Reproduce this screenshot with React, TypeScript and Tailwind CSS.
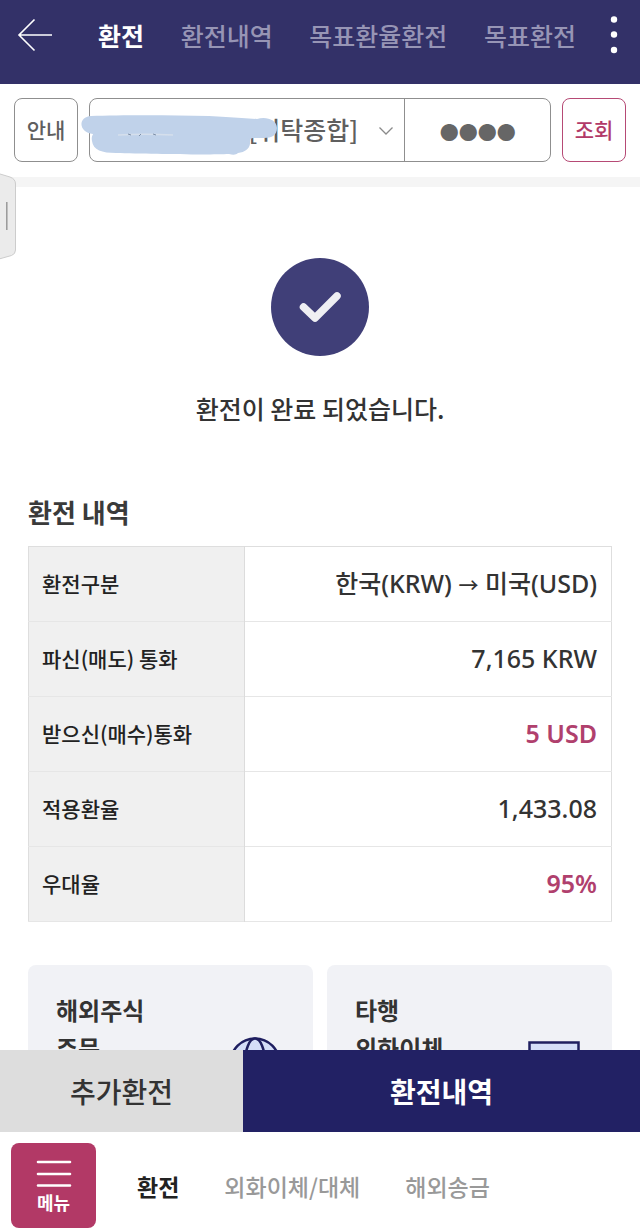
import { useState } from 'react';
import clsx from 'clsx';

const TABS = ['환전', '환전내역', '목표환율환전', '목표환전'];
const BOTTOM_TABS = ['환전', '외화이체/대체', '해외송금'];

const ROWS = [
  {
    label: '환전구분',
    value: (
      <>
        한국(KRW) <span className="text-[20px]">→</span> 미국(USD)
      </>
    ),
  },
  { label: '파신(매도) 통화', value: '7,165 KRW' },
  { label: '받으신(매수)통화', value: '5 USD', accent: true },
  { label: '적용환율', value: '1,433.08' },
  { label: '우대율', value: '95%', accent: true },
];

// ── Top navigation ────────────────────────────────────────────────────────────
function TopNav() {
  const [active, setActive] = useState('환전');

  return (
    <header className="flex h-[84px] shrink-0 items-center bg-[#333168] pr-4 pb-[14px] pl-4 text-white">
      <button aria-label="뒤로" className="w-[82px] shrink-0">
        <svg width="38" height="34" viewBox="0 0 38 34" fill="none" stroke="currentColor" strokeWidth="1.6">
          <path d="M18.5 1.5 3 17l15.500 15.500M3 17h33" />
        </svg>
      </button>
      <nav className="flex flex-1 justify-between">
        {TABS.map((tab) => (
          <button
            key={tab}
            onClick={() => setActive(tab)}
            className={clsx(
              'text-[25px] leading-9 whitespace-nowrap',
              tab === active ? 'font-bold text-white' : 'font-medium text-[#9795b5]'
            )}
          >
            {tab}
          </button>
        ))}
      </nav>
      <button aria-label="더보기" className="ml-7">
        <svg width="20" height="40" viewBox="0 0 20 40" fill="currentColor">
          <circle cx="10" cy="4.500" r="3.200" />
          <circle cx="10" cy="19.500" r="3.200" />
          <circle cx="10" cy="35" r="3.200" />
        </svg>
      </button>
    </header>
  );
}

// ── Account + password row ────────────────────────────────────────────────────
function AccountBar() {
  const [pin, setPin] = useState('●●●●');

  return (
    <div className="flex shrink-0 gap-[11px] border-b-10 border-[#f5f5f5] px-[14px] pt-[14px] pb-[15px] text-[#5f5f5f]">
      <button className="size-16 shrink-0 rounded-lg border border-[#8f8f8f] text-[21px] font-medium">안내</button>

      <div className="relative flex h-16 min-w-0 flex-1 rounded-lg border border-[#8f8f8f]">
        <div className="relative min-w-0 flex-[317]">
          <select
            aria-label="계좌"
            className="h-full w-full appearance-none bg-transparent pr-[46px] text-right text-[25px] font-medium [text-align-last:right]"
          >
            <option>[위탁종합]</option>
          </select>
          <svg
            className="pointer-events-none absolute top-[26px] right-[10px]"
            width="16"
            height="12"
            viewBox="0 0 16 12"
            fill="none"
            stroke="#8a8a8a"
            strokeWidth="1.3"
          >
            <path d="m1.500 2.500 6.500 6.500 6.500-6.500" />
          </svg>
        </div>
        <input
          aria-label="비밀번호"
          value={pin}
          onChange={(e) => setPin(e.target.value)}
          className="min-w-0 flex-[146] border-l border-[#8f8f8f] pt-1 text-center text-[19px] text-[#666666]"
        />
        {/* marker stroke hiding the account number */}
        <svg className="pointer-events-none absolute top-4 -left-[10px]" width="198" height="44" viewBox="0 0 198 44">
          <path
            d="M11 1C40 0 90 0 129 1c18 1 34 2 48 3 8-3 20 0 20 9 0 7-5 10-13 10h-11c-3 0-3 3-3 6-1 5-5 8-12 9-2 2-5 2-9 1-20 1-83 0-113-1-14 0-23-3-24-12-1-5 1-6 1-7C-1 18-3 2 11 1Z"
            fill="#c0d2ea"
          />
          <path d="M38 20c18-1 36-1 55 0" fill="none" stroke="#d5dfec" strokeWidth="1.300" />
          <path d="m48 19 3 1m8 1 2-2m12 0 3 1" fill="none" stroke="#7d8fa8" strokeWidth="1" />
        </svg>
      </div>

      <button className="size-16 shrink-0 rounded-lg border border-[#b64a75] text-[21px] font-medium text-[#b23a68]">
        조회
      </button>
    </div>
  );
}

function SummaryTable() {
  return (
    <table className="mt-4 w-full border-collapse border border-[#dedede]">
      <tbody>
        {ROWS.map(({ label, value, accent }) => (
          <tr key={label} className="h-[75px] border-b border-[#e6e6e6]">
            <th
              scope="row"
              className="w-[37%] border-r border-[#dcdcdc] bg-[#f0f0f0] pl-[13px] text-left text-[21px] font-medium text-[#222222]"
            >
              {label}
            </th>
            <td
              className={clsx(
                "pr-[14px] text-right font-['Noto_Sans','Noto_Sans_CJK_KR',sans-serif] text-[25px]",
                accent ? 'font-semibold text-[#b0406d]' : 'font-medium text-[#333333]'
              )}
            >
              {value}
            </td>
          </tr>
        ))}
      </tbody>
    </table>
  );
}

function GlobeIcon() {
  return (
    <svg width="52" height="52" viewBox="0 0 52 52" fill="#d5def8" stroke="#1f1f60" strokeWidth="2.500">
      <circle cx="26" cy="26" r="24.500" />
      <ellipse cx="26" cy="26" rx="10" ry="24.500" />
      <path d="M2 26h48M5 15h42M5 37h42" fill="none" />
    </svg>
  );
}

function TransferIcon() {
  return (
    <svg width="52" height="52" viewBox="0 0 52 52" fill="#d5def8" stroke="#1f1f60" strokeWidth="2.500">
      <rect x="1.500" y="5.500" width="49" height="40" />
      <path d="M10 36h32" />
    </svg>
  );
}

const SHORTCUTS = [
  { title: ['해외주식', '주문'], Icon: GlobeIcon },
  { title: ['타행', '외화이체'], Icon: TransferIcon },
];

export default function App() {
  const [bottomTab, setBottomTab] = useState('환전');

  return (
    <div className="relative flex h-screen flex-col overflow-hidden bg-white font-['Noto_Sans_CJK_KR','Noto_Sans',sans-serif]">
      <TopNav />
      <AccountBar />

      {/* edge panel handle */}
      <svg className="absolute top-[173px] left-0" width="17" height="87" viewBox="0 0 17 87" aria-hidden="true">
        <path d="M-1 .7 10 4q5.500 2 5.500 7v66q0 4-4 5.500L-1 86Z" fill="#ebebeb" stroke="#cccccc" />
        <path d="M6.800 29v28" stroke="#999999" strokeWidth="1.500" />
      </svg>

      <main className="min-h-0 flex-1 overflow-hidden px-7 pt-[71px]">
        <div className="flex flex-col items-center">
          <svg width="98" height="98" viewBox="0 0 98 98" fill="none">
            <circle cx="49" cy="49" r="49" fill="#403f78" />
            <path
              d="m32.500 49 11.500 11L66 38"
              stroke="#efeff3"
              strokeWidth="7.500"
              strokeLinecap="round"
              strokeLinejoin="round"
            />
          </svg>
          <p className="mt-[34px] text-[25px] leading-9 font-medium text-[#333333]">환전이 완료 되었습니다.</p>
        </div>

        <h2 className="mt-[68px] text-[26px] leading-9 font-bold text-[#3a3a3a]">환전 내역</h2>
        <SummaryTable />

        <div className="mt-[43px] flex gap-[14px]">
          {SHORTCUTS.map(({ title, Icon }) => (
            <a key={title[0]} href="#" className="flex flex-1 justify-between rounded-lg bg-[#f1f2f6] px-7 pt-[26px] pb-7">
              <span className="text-[24px] leading-[38px] font-bold text-[#333333]">
                {title[0]}
                <br />
                {title[1]}
              </span>
              <span className="mt-[46px] mr-1">
                <Icon />
              </span>
            </a>
          ))}
        </div>
      </main>

      <div className="flex h-[82px] shrink-0 text-[28px]">
        <button className="w-[38%] bg-[#dddddd] font-medium text-[#333333]">추가환전</button>
        <button className="flex-1 bg-[#222164] font-bold text-white">환전내역</button>
      </div>

      <nav className="flex shrink-0 items-center bg-white pt-[11px] pr-4 pb-[3px] pl-[11px]">
        <button className="flex size-[85px] flex-col items-center rounded-lg bg-[#b23966] pt-[17px] text-white">
          <svg width="36" height="28" viewBox="0 0 36 28" stroke="currentColor" strokeWidth="2.600" strokeLinecap="round">
            <path d="M2 2h32M2 14h32M2 25.500h32" />
          </svg>
          <span className="text-[18px] leading-7 font-bold">메뉴</span>
        </button>
        <div className="ml-[41px] flex gap-[45px]">
          {BOTTOM_TABS.map((tab) => (
            <button
              key={tab}
              onClick={() => setBottomTab(tab)}
              className={clsx(
                'text-[23px] leading-9 whitespace-nowrap',
                tab === bottomTab ? 'font-bold text-[#222222]' : 'font-medium text-[#999999]'
              )}
            >
              {tab}
            </button>
          ))}
        </div>
      </nav>
    </div>
  );
}
